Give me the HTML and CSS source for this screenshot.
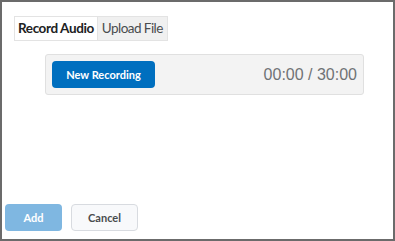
FILE: index.html
```html
<!DOCTYPE html>
<html>
<head>
<meta charset="UTF-8">
<title>Record Audio</title>
<link rel="stylesheet" href="styles.css">
</head>
<body>
	<div class="dialog">
		<div class="tabs">
			<div class="tab active">Record Audio</div>
			<div class="tab">Upload File</div>
		</div>
		<section class="recorder">
			<button class="btn-rec">New Recording</button>
			<span class="timer">00:00 / 30:00</span>
		</section>
		<footer class="actions">
			<button class="btn add">Add</button>
			<button class="btn cancel">Cancel</button>
		</footer>
	</div>
</body>
</html>
```
FILE: styles.css
```css
*{
	margin:0;
	padding:0;
	box-sizing:border-box;
}
body{
	font-family: Lato, "Noto Sans", sans-serif;
	background:#fff;
}
.dialog{
	width:395px;
	height:241px;
	border:2px solid #6b6b6b;
	display:flex;
	flex-direction:column;
}
.tabs{
	display:flex;
	margin:14px 0 0 12px;
}
.tab{
	height:25px;
	line-height:23px;
	padding:0 4px;
	font-size:13.5px;
	letter-spacing:-0.55px;
	color:#494c4e;
	background:#f0f0f0;
	border:1px solid #e3e3e3;
	border-left:none;
}
.tab.active{
	padding:0 3px;
	background:#fff;
	font-weight:bold;
	letter-spacing:-0.4px;
	color:#202122;
	border-left:1px solid #e3e3e3;
}
.recorder{
	display:flex;
	align-items:center;
	justify-content:space-between;
	margin:13px 29px 0 43px;
	height:41px;
	padding:0 6px 0 6px;
	background:#f3f3f3;
	border:1px solid #e0e0e0;
	border-radius:3px;
}
.btn-rec{
	width:103px;
	height:27px;
	border:none;
	border-radius:4px;
	background:#006fbf;
	color:#fff;
	font-family:inherit;
	font-weight:bold;
	font-size:11px;
}
.timer{
	font-family:"Liberation Sans", Arial, sans-serif;
	font-size:16px;
	color:#6f7275;
}
.actions{
	margin-top:auto;
	display:flex;
	gap:9px;
	padding:0 0 8px 3px;
}
.btn{
	height:27px;
	border-radius:4px;
	font-family:inherit;
	font-weight:bold;
	font-size:11px;
}
.add{
	width:57px;
	border:none;
	background:#7fb7e1;
	color:#fff;
}
.cancel{
	width:67px;
	background:#f8f9fb;
	border:1px solid #d8dbe0;
	color:#494c4e;
}
```
